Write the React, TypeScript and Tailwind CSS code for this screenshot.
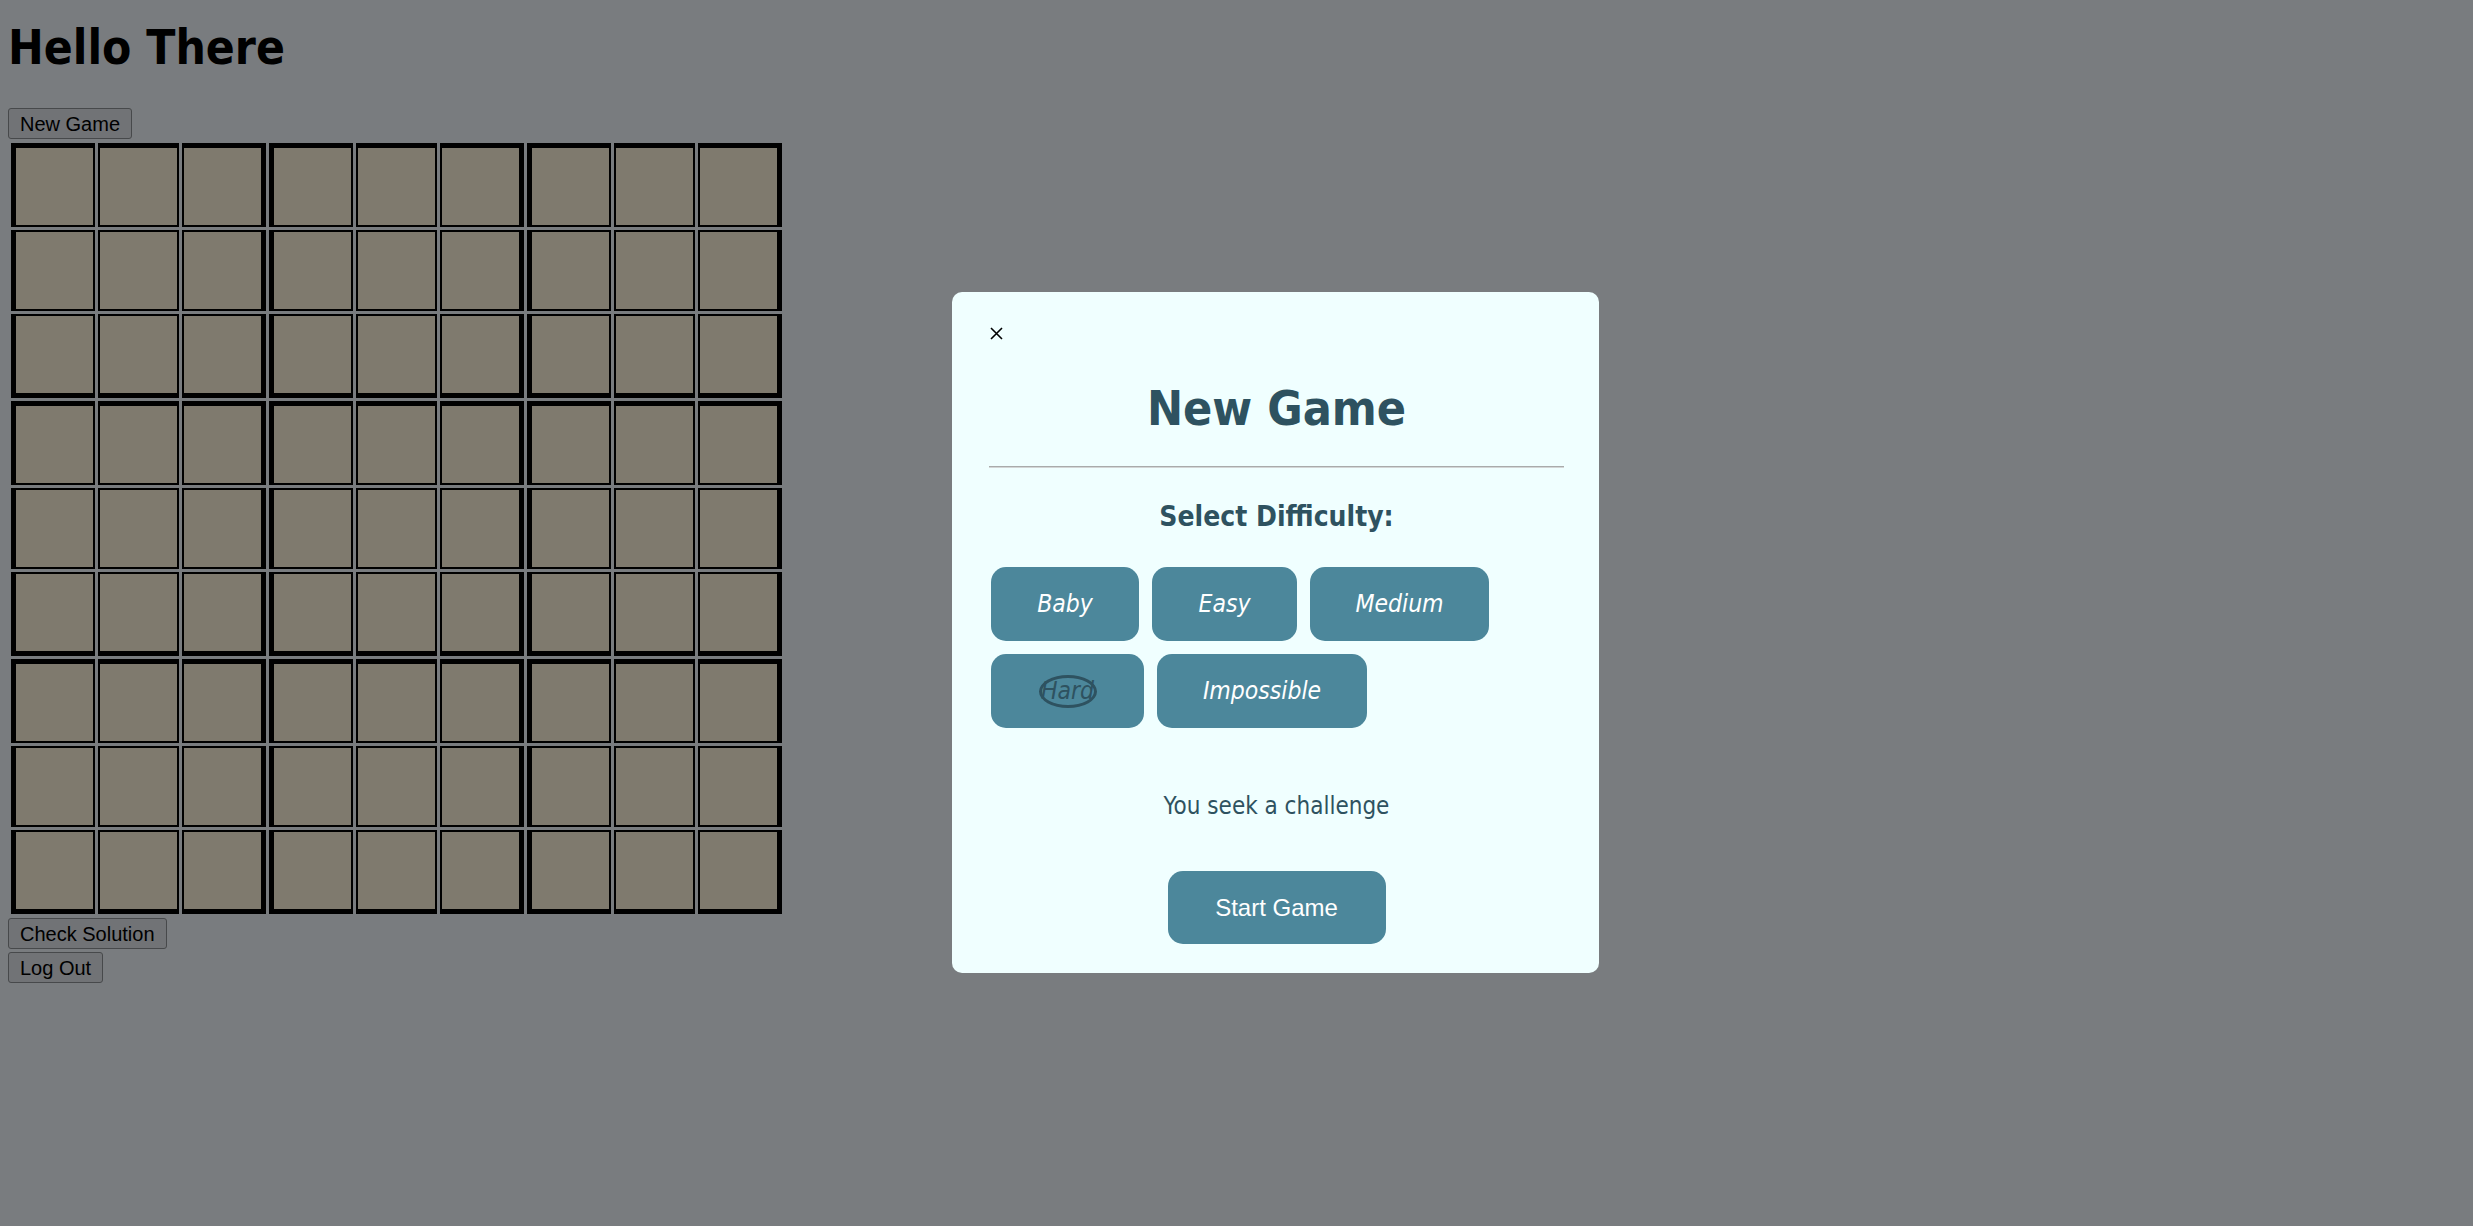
import React from "react"

const cond = "font-['DejaVu_Sans_Condensed','DejaVu_Sans',sans-serif]"
const arial = "font-['Liberation_Sans',Arial,sans-serif]"

const rows = Array.from({ length: 9 }, (_, r) => r)
const cols = Array.from({ length: 9 }, (_, c) => c)

function Cell({ r, c }: { r: number; c: number }) {
  return (
    <div
      className={[
        "w-[77px] h-[77px] box-content bg-[#7f7a6e] border-black",
        c % 3 === 0 ? "border-l-[5px]" : "border-l-2",
        c % 3 === 2 ? "border-r-[5px]" : "border-r-2",
        r % 3 === 0 ? "border-t-[5px]" : "border-t-2",
        r % 3 === 2 ? "border-b-[5px]" : "border-b-2",
      ].join(" ")}
    />
  )
}

function PageButton({ children }: { children: React.ReactNode }) {
  return (
    <button
      className={`${arial} h-[31px] px-[11px] text-[20px] leading-none text-black bg-[#717376] border border-[#47494b] rounded-[3px]`}
    >
      {children}
    </button>
  )
}

const difficulties = [
  [
    { label: "Baby", w: "w-[148px]" },
    { label: "Easy", w: "w-[145px]" },
    { label: "Medium", w: "w-[179px]" },
  ],
  [
    { label: "Hard", w: "w-[153px]", active: true },
    { label: "Impossible", w: "w-[210px]" },
  ],
]

export default function App() {
  return (
    <div className="relative min-h-[1226px] w-full bg-[#797c7f] pl-2">
      <h1 className={`${cond} pt-[20px] text-[47.5px] leading-[56px] font-bold text-black`}>Hello There</h1>
      <div className="mt-[32px]">
        <PageButton>New Game</PageButton>
      </div>
      <div className="mt-[1px] p-[3px] w-fit flex flex-col gap-[3px]">
        {rows.map((r) => (
          <div key={r} className="flex gap-[3px]">
            {cols.map((c) => (
              <Cell key={c} r={r} c={c} />
            ))}
          </div>
        ))}
      </div>
      <div className="flex flex-col items-start gap-[3px] mt-[1px]">
        <PageButton>Check Solution</PageButton>
        <PageButton>Log Out</PageButton>
      </div>

      {/* modal */}
      <div className="absolute left-[952px] top-[292px] w-[647px] h-[681px] rounded-[10px] bg-[#f0ffff] pt-[35px] pl-[37px] pr-[35px]">
        <div className="h-[13px] pl-[1px]">
          <svg width="13" height="13" viewBox="0 0 13 13">
            <path d="M1 1 L12 12 M12 1 L1 12" stroke="#000" strokeWidth="1.6" />
          </svg>
        </div>
        <h2 className={`${cond} mt-[40px] text-center text-[48px] leading-[56px] font-bold text-[#2e5260]`}>New Game</h2>
        <div className="mt-[30px] h-[2px] border-t border-[#a9abab] bg-[#d3d6d6]" />
        <h3 className={`${cond} mt-[34px] text-center text-[28px] leading-[30px] font-bold text-[#2e5260]`}>
          Select Difficulty:
        </h3>
        <div className="mt-[35px] pl-[2px] flex flex-col gap-[13px]">
          {difficulties.map((row, i) => (
            <div key={i} className="flex gap-[13px]">
              {row.map((d) => (
                <button
                  key={d.label}
                  className={`${cond} ${d.w} h-[74px] rounded-[15px] bg-[#4c879b] italic text-[24.5px] flex items-center justify-center ${
                    d.active ? "text-[#2e5260]" : "text-white"
                  }`}
                >
                  {d.active ? (
                    <span className="w-[58px] h-[33px] border-[3px] border-[#2e5260] rounded-[50%] flex items-center justify-center">
                      {d.label}
                    </span>
                  ) : (
                    d.label
                  )}
                </button>
              ))}
            </div>
          ))}
        </div>
        <p className={`${cond} mt-[63px] text-center text-[24px] leading-[30px] text-[#2e5260]`}>You seek a challenge</p>
        <div className="mt-[50px] flex justify-center">
          <button className={`${arial} w-[218px] h-[73px] rounded-[15px] bg-[#4c879b] text-white text-[24px]`}>
            Start Game
          </button>
        </div>
      </div>
    </div>
  )
}
